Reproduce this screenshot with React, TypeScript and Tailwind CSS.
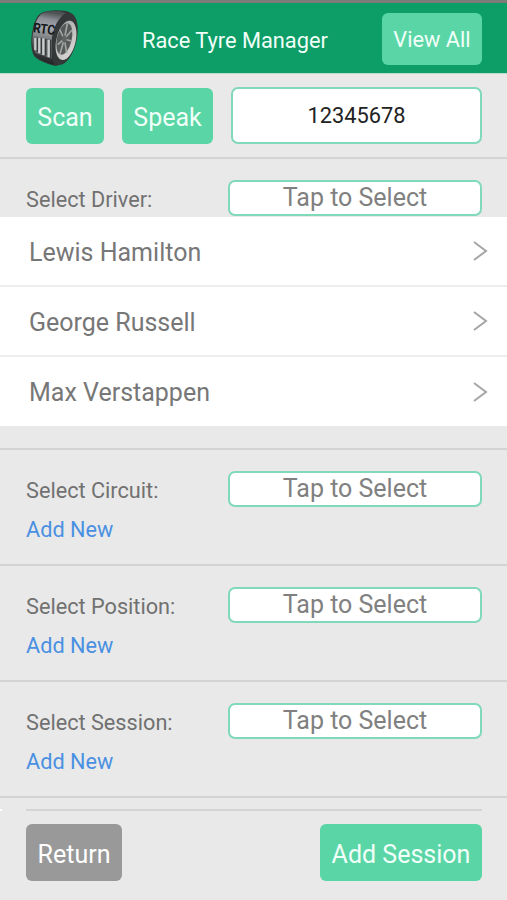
const drivers = ["Lewis Hamilton", "George Russell", "Max Verstappen"];

function TyreLogo() {
  return (
    <svg width="50" height="58" viewBox="27 15 150 174" className="block">
      <defs>
        <linearGradient id="tread" x1="0.3" y1="0" x2="0.2" y2="1">
          <stop offset="0" stopColor="#4e5254" />
          <stop offset="0.14" stopColor="#8d9197" />
          <stop offset="0.3" stopColor="#a3a7ad" />
          <stop offset="0.5" stopColor="#7b7f82" />
          <stop offset="0.75" stopColor="#3a3c3e" />
          <stop offset="1" stopColor="#1d1f20" />
        </linearGradient>
        <linearGradient id="rim" x1="0" y1="0" x2="1" y2="1">
          <stop offset="0" stopColor="#a2a5a5" />
          <stop offset="1" stopColor="#dedcda" />
        </linearGradient>
      </defs>
      <path d="M64 24C86 13 132 14 152 23C171 38 175 66 169 100C161 143 134 179 108 183C90 181 56 168 43 154C33 140 31 105 38 74C43 48 52 31 64 24Z" fill="#343738" />
      <path d="M65 26C86 15 116 17 137 24C113 40 98 71 95 108C93 140 95 164 104 179C85 175 59 165 46 152C36 135 35 101 41 75C46 51 55 33 65 26Z" fill="url(#tread)" />
      <ellipse cx="134" cy="102" rx="36" ry="79" transform="rotate(13 134 102)" fill="#353839" />
      <ellipse cx="138" cy="106" rx="29" ry="60" transform="rotate(13 138 106)" fill="url(#rim)" />
      <ellipse cx="133" cy="102" rx="22" ry="48" transform="rotate(13 133 102)" fill="#555958" />
      <path d="M133 102L142 56M133 102L156 75M133 102L154 108M133 102L140 143M133 102L120 146M133 102L113 119M133 102L119 74" stroke="#a1a4a3" strokeWidth="5" />
      <ellipse cx="133" cy="102" rx="7" ry="11" fill="#606464" />
      <path d="M40 94L96 104L95 161L46 144Z" fill="#606365" />
      <path d="M46 98V136M58 98V145M70 100V150M86 104V157" stroke="#c9cccd" strokeWidth="7" />
      <path d="M52 98V140M64 99V147M77 102V151M92 105V158" stroke="#303334" strokeWidth="3" />
      <text x="38" y="82" fontSize="41" fontWeight="700" textLength="66" lengthAdjust="spacingAndGlyphs" transform="rotate(7 38 82)" fill="#131617" className="font-[Roboto,sans-serif]">RTC</text>
    </svg>
  );
}

function SelectField() {
  return (
    <button className="h-[36px] w-[254px] rounded-[7px] border-2 border-[#80d9b8] bg-white text-center text-[25px] leading-[32px] text-[#808080]">
      Tap to Select
    </button>
  );
}

function SelectSection({ label }: { label: string }) {
  return (
    <section className="h-[116px] border-b-2 border-[#d3d3d3] pr-[25px] pl-[26px] pt-[21px]">
      <div className="flex justify-between">
        <span className="pt-[4px] text-[21.700px] leading-[31px] text-[#717171]">{label}</span>
        <SelectField />
      </div>
      <a className="mt-[7px] block text-[21.700px] leading-[32px] text-[#4a90e2]">Add New</a>
    </section>
  );
}

export default function App() {
  return (
    <main className="flex h-[900px] w-[507px] flex-col overflow-hidden bg-[#e9e9e9] font-[Roboto,sans-serif]">
      <header className="flex h-[74px] shrink-0 border-t-[3px] border-b border-t-[#7c7c7b] border-b-[#b9ddce] bg-[#0d9d66] pr-[25px] pl-[29px]">
        <div className="w-[113px] pt-[7px]"><TyreLogo /></div>
        <h1 className="pt-[22px] text-[21.800px] leading-[31px] whitespace-nowrap text-[#f0fff8]">Race Tyre Manager</h1>
        <button className="mt-[10px] ml-auto h-[52px] w-[100px] rounded-[6px] bg-[#5ad5a6] pt-[3px] text-[21.800px] text-[#f0fff8]">View All</button>
      </header>
      <div className="flex h-[85px] shrink-0 border-b-2 border-[#d3d3d3] pt-[14px] pl-[26px]">
        <button className="h-[56px] w-[78px] rounded-[6px] bg-[#5ad5a6] pt-[3px] text-[25px] text-[#f0fff8]">Scan</button>
        <button className="ml-[18px] h-[56px] w-[91px] rounded-[6px] bg-[#5ad5a6] pt-[3px] text-[25px] text-[#f0fff8]">Speak</button>
        <div className="-mt-px ml-[18px] h-[57px] w-[251px] rounded-[7px] border-2 border-[#80d9b8] bg-white text-center text-[21.800px] leading-[53px] text-[#222222]">12345678</div>
      </div>
      <div className="flex h-[58px] shrink-0 justify-between pt-[21px] pr-[25px] pl-[26px]">
        <span className="pt-[4px] text-[21.700px] leading-[32px] text-[#717171]">Select Driver:</span>
        <SelectField />
      </div>
      <ul className="shrink-0 bg-white">
        {drivers.map((driver) => (
          <li key={driver} className="flex h-[70px] items-center justify-between border-b-2 border-[#eeeeee] pr-[19px] pl-[29px] text-[25px] text-[#777777] last:h-[69px] last:border-b-0">
            <span className="pt-[3px]">{driver}</span>
            <svg width="16" height="22" viewBox="0 0 16 22" fill="none" stroke="#a5a5a5" strokeWidth="2">
              <path d="M2 2L14 11L2 20" />
            </svg>
          </li>
        ))}
      </ul>
      <div className="h-[24px] shrink-0 border-b-2 border-[#d3d3d3]" />
      <SelectSection label="Select Circuit:" />
      <SelectSection label="Select Position:" />
      <SelectSection label="Select Session:" />
      <footer className="flex grow items-start pt-[11px]">
        <div className="h-[2px] w-[2px] shrink-0 bg-white" />
        <div className="ml-[24px] flex w-[456px] justify-between border-t-2 border-[#d5d5d5] pt-[13px]">
          <button className="h-[57px] w-[96px] rounded-[6px] bg-[#999999] pt-[4px] text-[25px] text-white">Return</button>
          <button className="h-[57px] w-[162px] rounded-[6px] bg-[#5ad5a6] pt-[4px] text-[25px] text-[#f0fff8]">Add Session</button>
        </div>
      </footer>
    </main>
  );
}
